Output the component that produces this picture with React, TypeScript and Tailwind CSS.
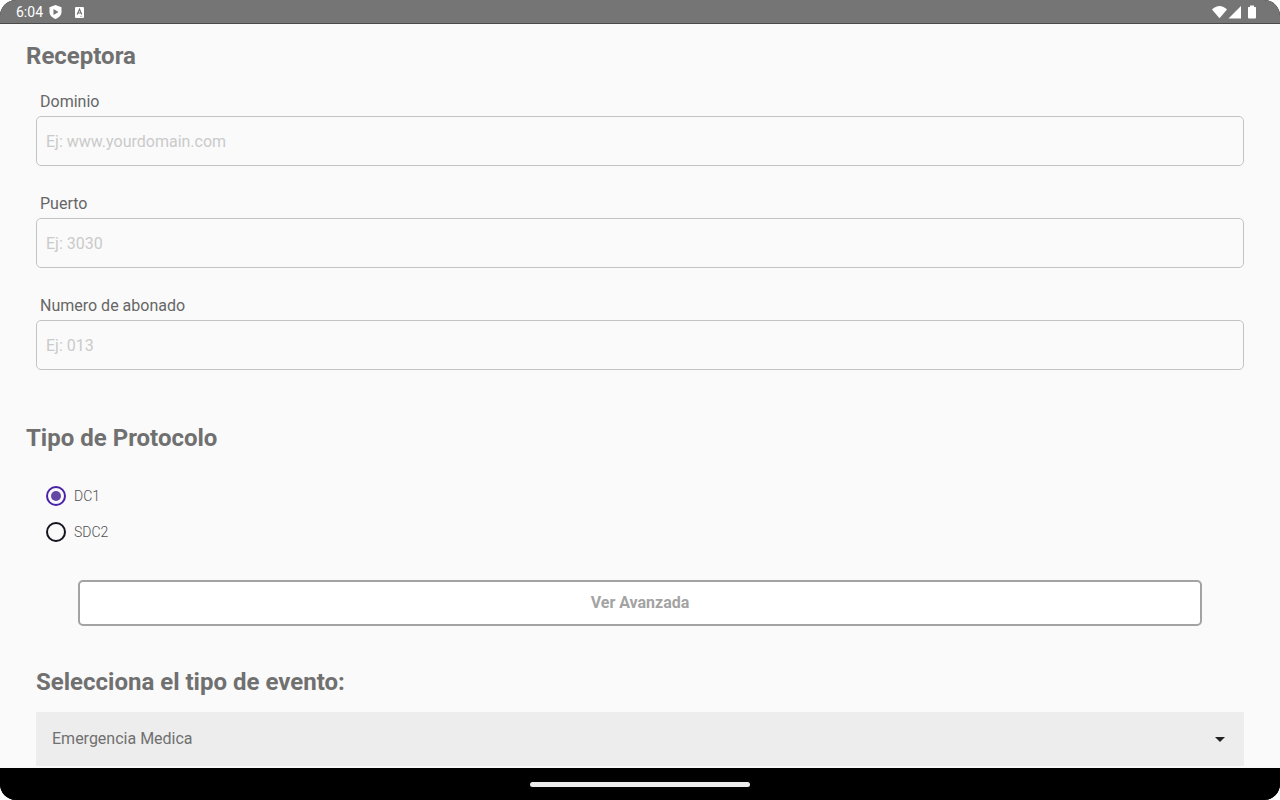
import { useState } from "react";

interface TextFieldProps {
  id: string;
  label: string;
  placeholder: string;
}

const protocols = ["DC1", "SDC2"];

function StatusBar() {
  return (
    <header className="flex h-6 flex-shrink-0 items-center justify-between border-b border-[#4a4a4a] bg-[#757575] pr-6 pl-4 text-white">
      <div className="flex items-center">
        <span className="text-sm leading-5">6:04</span>
        {/* Shield */}
        <svg className="ml-1.5 h-4 w-[13px]" viewBox="0 0 12 16" aria-hidden="true">
          <path
            d="M6 1 12 3.2V8c0 3.2-2.500 5.700-6 7C2.500 13.700 0 11.200 0 8V3.200z"
            fill="#fff"
          />
          <path d="M4 5v6l5-3z" fill="#757575" />
        </svg>
        {/* App notification */}
        <svg className="ml-3 h-4 w-4" viewBox="0 0 16 16" aria-hidden="true">
          <rect x="1" y="3" width="9" height="11" rx="1" fill="#fff" />
          <path
            d="M3.200 10.500 5.500 5.300 7.800 10.500M4 9h3"
            fill="none"
            stroke="#757575"
            strokeWidth="1.200"
          />
          <path d="M6 12.300h2.500" stroke="#bbb" />
        </svg>
      </div>
      <svg className="h-4 w-11" viewBox="0 0 44 16" fill="#fff" aria-hidden="true">
        <path d="M7.500 14.300 0 5.500C4.500.8 10.500.8 15 5.500z" />
        <path d="M29 2v12.500H16.500z" />
        <path d="M38 1.500h4V3h1.500q.5 0 .5.500v10q0 1-1 1h-6q-1 0-1-1v-10q0-.5.500-.5H38z" />
      </svg>
    </header>
  );
}

function TextField({ id, label, placeholder }: TextFieldProps) {
  return (
    <div className="flex flex-col gap-0.5">
      <label htmlFor={id} className="pl-1 text-base leading-6 text-[#666666]">
        {label}
      </label>
      <input
        id={id}
        type="text"
        placeholder={placeholder}
        className="h-[50px] w-full rounded-[5px] border border-[#c4c4c4] bg-transparent px-[9px] text-base text-[#666666] placeholder:text-[#cacaca]"
      />
    </div>
  );
}

export default function App() {
  const [protocol, setProtocol] = useState("DC1");

  return (
    <div className="flex h-screen flex-col overflow-hidden rounded-2xl bg-black font-[Roboto,sans-serif]">
      <StatusBar />

      <main className="min-h-0 flex-1 overflow-hidden bg-[#fafafa] px-9 pt-4 text-[#707070]">
        <h2 className="-ml-2.5 text-2xl leading-8 font-bold">Receptora</h2>
        <div className="mt-[18px] flex flex-col gap-[26px]">
          <TextField id="dominio" label="Dominio" placeholder="Ej: www.yourdomain.com" />
          <TextField id="puerto" label="Puerto" placeholder="Ej: 3030" />
          <TextField id="abonado" label="Numero de abonado" placeholder="Ej: 013" />
        </div>

        <h2 className="mt-[52px] -ml-2.5 text-2xl leading-8 font-bold">
          Tipo de Protocolo
        </h2>
        <div className="mt-6 flex flex-col pl-2.5" role="radiogroup" aria-label="Tipo de Protocolo">
          {protocols.map((name) => (
            <label key={name} className="flex h-9 items-center gap-2 self-start text-sm font-light text-[#505050]">
              <input
                type="radio"
                name="protocol"
                value={name}
                checked={protocol === name}
                onChange={() => setProtocol(name)}
                className="grid h-5 w-5 appearance-none place-items-center rounded-full border-2 border-[#15131f] before:h-2.5 before:w-2.5 before:rounded-full checked:border-[#4a21a8] checked:before:bg-[#6547a5]"
              />
              {name}
            </label>
          ))}
        </div>

        <div className="mt-[30px] px-[42px]">
          <button
            type="button"
            className="block h-[46px] w-full rounded-[5px] border-2 border-[#a3a3a3] bg-white text-base font-bold text-[#a3a3a3]"
          >
            Ver Avanzada
          </button>
        </div>

        <label htmlFor="evento" className="mt-10 block text-2xl leading-8 font-bold">
          Selecciona el tipo de evento:
        </label>
        <div className="mt-3.5 grid items-center bg-[#ededed]">
          <select
            id="evento"
            className="col-start-1 row-start-1 h-[54px] w-full appearance-none bg-transparent px-4 text-base text-[#707070]"
          >
            <option>Emergencia Medica</option>
          </select>
          <svg
            className="pointer-events-none col-start-1 row-start-1 mr-[19px] h-[5px] w-2.5 justify-self-end"
            viewBox="0 0 10 5"
            aria-hidden="true"
          >
            <path d="M0 0h10L5 5z" fill="#222" />
          </svg>
        </div>
      </main>

      <nav className="flex h-8 flex-shrink-0 items-center justify-center bg-black">
        <div className="h-[5px] w-[220px] rounded-full bg-[#ececec]" />
      </nav>
    </div>
  );
}
